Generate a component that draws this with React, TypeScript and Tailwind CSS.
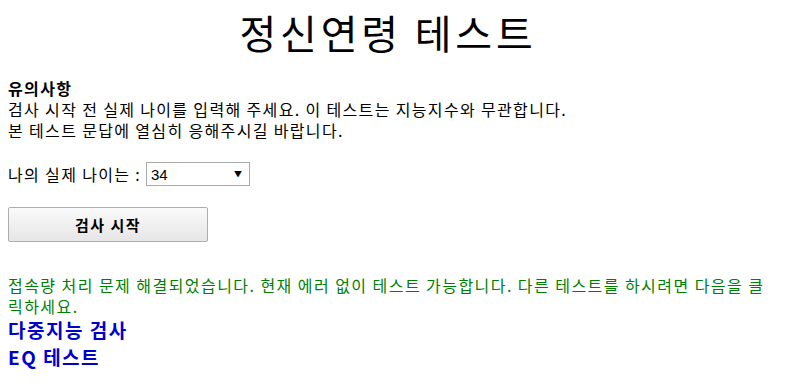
export default function App() {
  return (
    <div className="p-2 text-black text-[16px] leading-[21px] tracking-[1.35px] font-['Noto_Sans_CJK_KR','Malgun_Gothic',sans-serif]">
      <h1 className="text-center text-[40px] leading-[48px] tracking-[3.8px] mt-0 mb-[22px] pr-[26px]">정신연령 테스트</h1>

      <div>
        <b>유의사항</b>
        <br />
        검사 시작 전 실제 나이를 입력해 주세요. 이 테스트는 지능지수와 무관합니다.
        <br />
        본 테스트 문답에 열심히 응해주시길 바랍니다.
      </div>

      <div className="mt-[21px] flex items-center">
        <span>나의 실제 나이는 :&nbsp;</span>
        <div className="relative">
          <select
            defaultValue="34"
            className="appearance-none w-[104px] h-[24px] border border-[#a9a9a9] bg-white text-[15px] tracking-normal pl-[4px] font-['Liberation_Sans',sans-serif]"
          >
            {Array.from({ length: 100 }, (_, i) => i + 1).map((n) => (
              <option key={n} value={String(n)}>
                {n}
              </option>
            ))}
          </select>
          <span className="pointer-events-none absolute right-[8px] top-[5px] text-[8px] leading-[14px] tracking-normal">▼</span>
        </div>
      </div>

      <button className="mt-[21px] w-[200px] h-[35px] border border-[#adadad] rounded-[2px] bg-gradient-to-b from-[#fafafa] to-[#e6e6e6] font-bold text-[15px] tracking-[1.5px]">
        검사 시작
      </button>

      <p className="mt-[33px] w-[764px] text-[#008000] tracking-[1.45px]">
        접속량 처리 문제 해결되었습니다. 현재 에러 없이 테스트 가능합니다. 다른 테스트를 하시려면 다음을 클릭하세요.
      </p>
      <a href="#" className="block -mt-[1px] text-[#0000cc] font-bold text-[19px] leading-[27px] tracking-[1.5px]">
        다중지능 검사
      </a>
      <a href="#" className="block text-[#0000cc] font-bold text-[19px] leading-[27px] tracking-[1.5px]">
        EQ 테스트
      </a>
    </div>
  );
}
